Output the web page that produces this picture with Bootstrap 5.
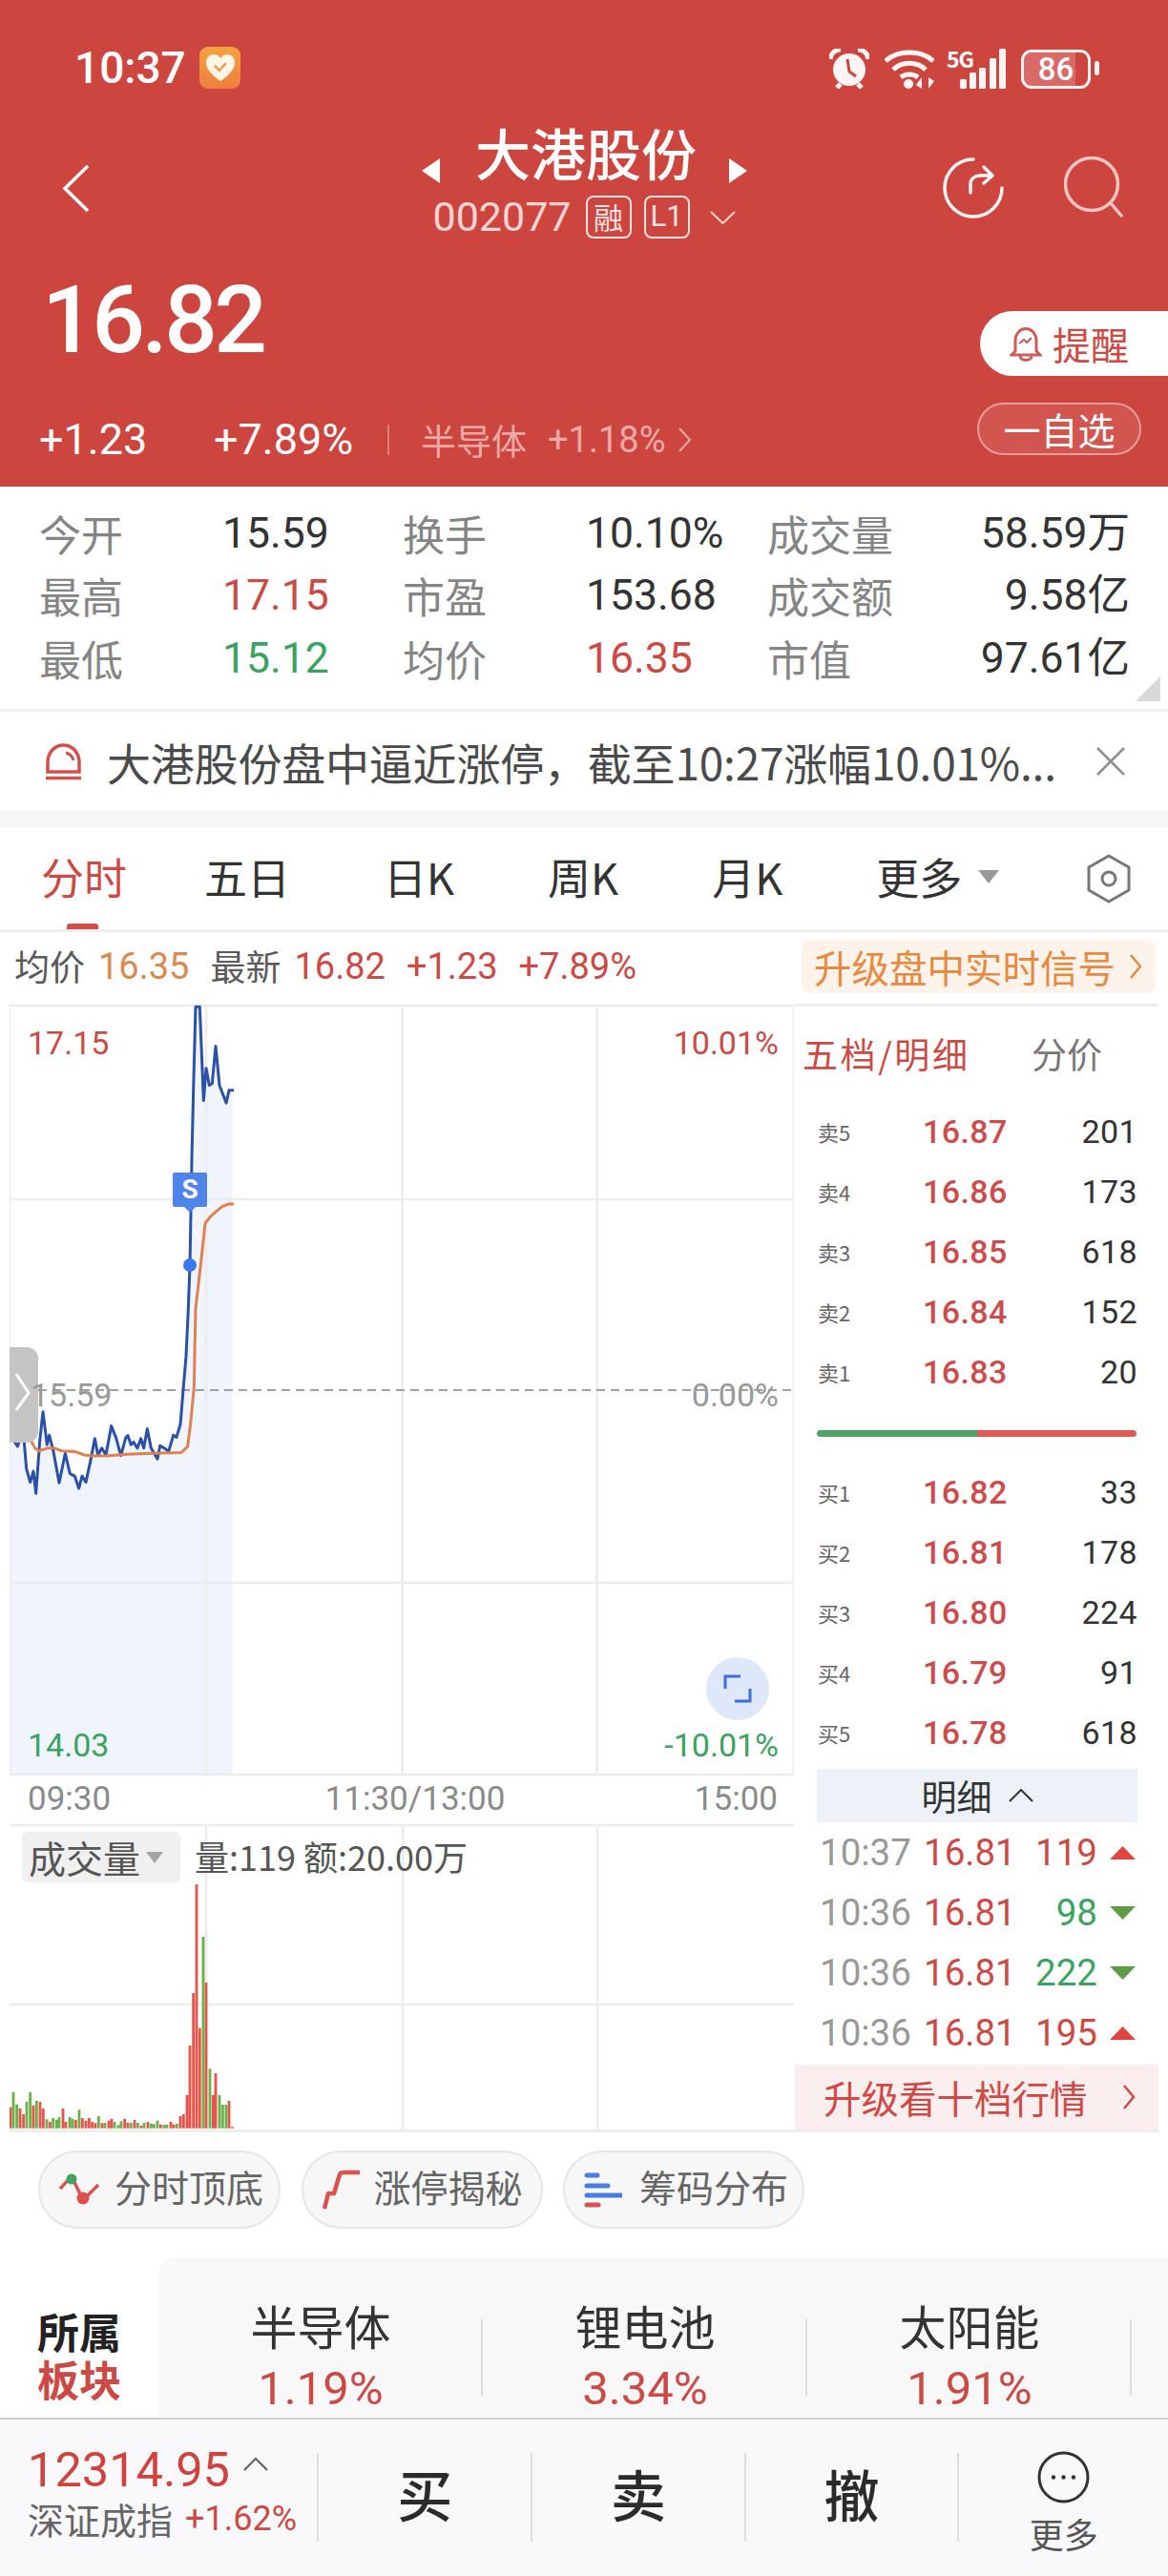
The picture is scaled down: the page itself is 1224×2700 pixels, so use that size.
<!DOCTYPE html>
<html lang="zh-CN">
<head>
<meta charset="utf-8">
<title>大港股份</title>
<link href="https://cdn.jsdelivr.net/npm/bootstrap@5.3.0/dist/css/bootstrap.min.css" rel="stylesheet">
<style>
html,body{margin:0;padding:0;background:#fff}
body{width:1224px;height:2700px;overflow:hidden;font-family:Roboto,"Noto Sans CJK SC",sans-serif;color:#333}
.cjk{font-family:"Noto Sans CJK SC",sans-serif}
.hdr{height:510px;background:#cc453f;color:#fff}
.statusbar{padding:49px 72px 0 78px;height:93px}
.clock{font-size:46px;line-height:44px;font-weight:500;width:131px}
.heart{width:43px;height:44px;border-radius:9px;background:linear-gradient(#f4a23f,#ee7e3e)}
.status-icons{gap:16px}
.fiveg{font-size:23px;line-height:20px;font-weight:700;letter-spacing:-1px;width:27px;align-self:flex-start;margin:2px -29px 0 -3px}
.batt{width:73px;height:41px;border:3px solid #fff3f2;border-radius:11px;background:linear-gradient(90deg,#d96a65 80%,transparent 80%);background-clip:padding-box;font-size:33px;font-weight:500;line-height:35px;text-align:center}
.batt-nub{width:5px;height:15px;background:#fff3f2;border-radius:3px;margin-left:-12px}
.navgrid{display:grid;grid-template-columns:1fr auto 1fr;margin-top:35px;height:120px}
.navback{padding:44px 0 0 65px}
.navright{padding:36px 47px 0 0;gap:62px}
.title{font-size:58px;line-height:62px;font-weight:500;width:233px;text-align:center;margin:0 33px 0 37px}
.tri{margin-top:38px}
.coderow{margin-top:13px;height:45px}
.code{font-size:43px;line-height:45px;color:#f8d5d3;margin-right:15px}
.tag{width:48px;height:45px;border:2px solid #fbe3e2;border-radius:8px;font-size:31px;line-height:40px;text-align:center;color:#fbe3e2;margin-right:13px}
.priceblock{padding:38px 0 0 46px}
.price{font-size:98px;line-height:100px;font-weight:500;letter-spacing:-3.5px;margin-left:-2px}
.chg{margin:55px 0 0 -5px;font-size:45px;line-height:40px;height:40px}
.chg1{width:183px}
.chg2{width:182px}
.chgdiv{width:2px;height:32px;background:#dd7f7b;margin-right:33px}
.chgsec{font-size:37px;color:#eda9a6;margin-right:22px}
.chgpct{font-size:38px;color:#eda9a6;margin-right:13px}
.pillcol{padding-top:78px}
.remind{width:197px;height:68px;background:#fff;border-radius:34px 0 0 34px;color:#cc4a45;font-size:40px;line-height:68px;padding-left:31px;gap:11px}
.watch{width:172px;height:55px;margin:28px 28px 0 0;border:2px solid #e99c98;border-radius:28px;background:#d2554f;color:#fff;font-size:39px;line-height:50px;text-align:center}
.stats{display:grid;grid-template-columns:192px 189px 192px 190px 190px 190px;grid-auto-rows:65.5px;height:236px;padding:16px 0 0 41px;border-bottom:3px solid #eeeeee;position:relative;align-items:center;font-size:44.5px;line-height:1}
.slab{font-size:44px;color:#858585}
.sval{color:#333}
.sr{text-align:right}
.up{color:#cc4a45}
.down{color:#3aa35f}
.corner{position:absolute;right:8px;bottom:8px}
.notice{height:104px;padding:0 45px 0 47px;gap:26px}
.noticetxt{font-size:46px;color:#4a4a4a;line-height:1;white-space:nowrap;width:985px;letter-spacing:-.2px}
.band{height:17px;background:#f6f6f6}
.tabs{height:110px;border-bottom:3px solid #eeeeee;padding:0 40px 4px 43px;position:relative;font-size:45px;gap:98px;flex-wrap:nowrap}
.tabs .nav-link{padding:0;color:#333;line-height:1}
.tabs .nav-link.active{color:#cc4a45}
.tab-first{margin-right:-17px}
.tabbar{position:absolute;left:70px;bottom:0;width:33px;height:6px;background:#d2504b;border-radius:3px 3px 0 0}
.tabmore{gap:17px}
.hexa{position:absolute;right:38px;top:28px}
.inforow{height:75px;padding:0 13px 3px 15px;font-size:38px}
.infolab{color:#5a5a5a;font-size:37px;margin-right:14px}
.infoval{margin-right:22px}
.orange{color:#d98a4e}
.upbtn{width:371px;height:56px;background:#fdf3ea;border-radius:9px;color:#e78a3f;font-size:39.5px;line-height:56px;padding-left:13px;gap:14px;white-space:nowrap}
.chartarea{padding:0 10px}
.leftcol{width:823px}
.canvas-main{position:relative;width:822px;height:810px}
.canvas-main>svg,.canvas-vol>svg{position:absolute;left:0;top:0;display:block}
.clab{position:absolute;font-size:34px;line-height:36px}
.gray{color:#999}
.c-tl{left:19px;top:23px}
.c-tr{right:16px;top:23px}
.c-ml{left:22px;top:392px}
.c-mr{right:16px;top:392px}
.c-bl{left:19px;top:759px}
.c-br{right:16px;top:759px}
.handle{position:absolute;left:0;top:360px;width:30px;height:100px;background:#c4c4c4;border-radius:0 12px 12px 0}
.sflag{position:absolute;left:171px;top:177px;width:36px;height:36px;background:#4f84ea;color:#fff;font-size:28px;line-height:36px;font-weight:700;text-align:center;border-radius:2px}
.sflag::after{content:"";position:absolute;left:12px;top:36px;border:6px solid transparent;border-top-color:#4f84ea;border-bottom:0}
.expand{position:absolute;left:730px;top:685px;width:66px;height:66px;border-radius:50%;background:#dfe8fb}
.axis{height:48px;padding:0 18px 0 19px;font-size:35px;color:#8a8a8a;line-height:47px}
.axismid{margin-left:26px}
.canvas-vol{position:relative;width:822px;height:323px}
.volbadge{position:absolute;left:13px;top:10px;width:166px;height:53px;background:#f0f0f0;border-radius:6px;font-size:39px;line-height:53px;color:#555;padding-left:7px;gap:6px}
.voltxt{position:absolute;left:194px;top:13px;font-size:36px;line-height:44px;color:#555;white-space:nowrap}
.rightcol{width:381px}
.panelhead{border-top:3px solid #eeeeee;padding:24px 23px 25px 8px;height:102.5px;font-size:37px;line-height:50px}
.panelhead .pa{color:#cc4a45;letter-spacing:2.6px;width:240px}
.panelhead .pb{color:#777}
.quote{height:63px;padding:0 22px 0 24px;font-size:34px;letter-spacing:.4px}
.qlab{width:110px;font-size:22px;color:#666;letter-spacing:0}
.qprice{color:#cc4c4c;font-weight:500}
.qnum{margin-left:auto;color:#333}
.splitbar{height:7px;margin:29px 23px 27px 23px;border-radius:4px;overflow:hidden}
.splitbar i{display:block;height:100%}
.mx{height:56px;margin:6.5px 22px 0 23px;background:#edf1f8;font-size:37px;line-height:56px;color:#333;gap:17px}
.dtl{height:63px;padding:0 24px 0 26px;font-size:38.5px}
.dtime{color:#999;width:109px}
.dprice{color:#cc4a45}
.dqty{margin-left:auto;margin-right:13px}
.upg{height:68px;margin-top:1.5px;background:#fbeeee;color:#cf4a45;font-size:39.5px;padding:0 24px 0 30px;white-space:nowrap}
.bottomline{height:3px;margin:-1px 10px 0;background:#eeeeee}
.pills{padding:19px 0 31px 40px;gap:21.500px}
.pilly{height:82px;background:#f7f7f7;border:2px solid #e6e6e6;border-radius:41px;font-size:39px;color:#666;line-height:78px;padding:0 0 0 20px;white-space:nowrap}
.pilly span{margin-top:-9px}
.pw1{width:254px;gap:16px}
.pw2{width:253px;gap:14px}
.pw3{width:253px;gap:18px}
.board{height:167px}
.boardlab{width:166px;padding-top:51px;font-size:44px;font-weight:700;line-height:50px;text-align:center;color:#222}
.boardlist{flex:1;background:#f8f8f8;border-top-left-radius:18px;overflow:hidden}
.bitem{width:340px;flex:none;position:relative;text-align:center;padding-top:42px}
.bitem::after{content:"";position:absolute;right:0;top:64px;width:2px;height:80px;background:#dcdcdc}
.bname{font-size:49px;line-height:56px;color:#333}
.bpct{font-size:49px;line-height:50px;margin-top:14px;color:#cc4a45}
.footerbar{height:167px;background:#f9f9fb;border-top:2px solid #cfcfcf}
.idx{width:333px;padding:28px 0 0 29px}
.idxnum{font-size:50.5px;line-height:50px;color:#d0423d;gap:14px}
.idxnum svg{margin-top:-12px}
.idxname{font-size:38px;line-height:44px;color:#666;margin-top:4px;white-space:nowrap}
.idxpct{font-size:36px;color:#cc4a45;margin-left:13px}
.fcell{width:224px;height:93px;margin-top:35px;border-left:2px solid #dedede;font-size:58px;color:#2b2b2b;font-weight:500;padding-bottom:8px}
.fmore{width:219px;margin-top:33px;padding-bottom:0;border-left:0;font-size:36px;line-height:38px;color:#555;font-weight:400;text-align:center}
.fmore svg{flex:none}
.fmore span{margin-top:12px}
.fdiv{width:2px;height:93px;background:#dedede;margin-top:35px}
</style>
</head>
<body>

<header class="hdr">
  <div class="statusbar d-flex justify-content-between">
    <div class="d-flex">
      <div class="clock">10:37</div>
      <div class="heart d-flex align-items-center justify-content-center">
        <svg width="32" height="30" viewBox="0 0 32 30"><path d="M16 29C6 22 1 16 1 9.500 1 4 5 1 9 1c3 0 5.500 1.500 7 4 1.500-2.500 4-4 7-4 4 0 8 3 8 8.500C31 16 26 22 16 29z" fill="#fff6e8"/><path d="M10 13l5 5 7-8" fill="none" stroke="#eda04c" stroke-width="2.500"/></svg>
      </div>
    </div>
    <div class="status-icons d-flex align-items-end">
      <svg width="42" height="42" viewBox="0 0 42 42"><circle cx="21" cy="22" r="17" fill="#fff5f4"/><path d="M1 11C2 4 7 1 12 1M41 11C40 4 35 1 30 1" fill="none" stroke="#fff5f4" stroke-width="5"/><path d="M8 41l4-4M34 41l-4-4" stroke="#fff5f4" stroke-width="5"/><path d="M19 11l2 13 7 5" fill="none" stroke="#cc453f" stroke-width="3"/></svg>
      <svg width="52" height="42" viewBox="0 0 52 42"><path d="M1 13C14 1 38 1 51 13M9 22C18 13 34 13 43 22M17 30C22 26 30 26 35 30" fill="none" stroke="#fff5f4" stroke-width="5"/><circle cx="25" cy="37" r="5" fill="#fff5f4"/><path d="M39 42V30l-6 8zM46 30v12l6-8z" fill="#fff5f4"/></svg>
      <span class="fiveg cjk">5G</span>
      <svg width="48" height="42" viewBox="0 0 48 42"><g fill="#fff5f4"><rect x="0" y="32" width="7" height="10" rx="1.500"/><rect x="10" y="25" width="7" height="17" rx="1.500"/><rect x="20" y="20" width="7" height="22" rx="1.500"/><rect x="31" y="10" width="7" height="32" rx="1.500"/><rect x="41" y="0" width="7" height="42" rx="1.500"/></g></svg>
      <div class="batt">86</div>
      <div class="batt-nub align-self-center"></div>
    </div>
  </div>

  <div class="navgrid">
    <div class="navback">
      <svg width="29" height="51" viewBox="0 0 29 51" class="d-block"><path d="M27 2L3 25.500 27 49" fill="none" stroke="#fff" stroke-width="3.500"/></svg>
    </div>
    <div>
      <div class="d-flex justify-content-center">
        <svg class="tri" width="19" height="26" viewBox="0 0 19 26"><path d="M19 0L0 13l19 13z" fill="#fff"/></svg>
        <div class="title cjk">大港股份</div>
        <svg class="tri" width="19" height="26" viewBox="0 0 19 26"><path d="M0 0l19 13L0 26z" fill="#fff"/></svg>
      </div>
      <div class="coderow d-flex justify-content-center align-items-center">
        <span class="code">002077</span>
        <span class="tag cjk">融</span>
        <span class="tag">L1</span>
        <svg width="27" height="14" viewBox="0 0 27 14" class="ms-2"><path d="M1 1l12.500 12L26 1" fill="none" stroke="#f8d5d3" stroke-width="2"/></svg>
      </div>
    </div>
    <div class="navright d-flex justify-content-end align-items-start">
      <svg width="66" height="66" viewBox="0 0 66 66"><path d="M33 3A30 30 0 1 0 63 33" fill="none" stroke="#fff3f2" stroke-width="3.500" stroke-linecap="round"/><path d="M30 38V29c0-6 5-9 10-9h12M44 11l9 9-9 8" fill="none" stroke="#fff3f2" stroke-width="3.500" stroke-linecap="round" stroke-linejoin="round"/></svg>
      <svg width="62" height="66" viewBox="0 0 62 66"><circle cx="29" cy="29" r="27.500" fill="none" stroke="#f7c5c2" stroke-width="3.500"/><path d="M50 50l10 12" stroke="#f7c5c2" stroke-width="3.500" stroke-linecap="round"/></svg>
    </div>
  </div>

  <div class="d-flex justify-content-between">
    <div class="priceblock">
      <div class="price">16.82</div>
      <div class="chg d-flex align-items-center">
        <span class="chg1">+1.23</span>
        <span class="chg2">+7.89%</span>
        <span class="chgdiv"></span>
        <span class="chgsec cjk">半导体</span>
        <span class="chgpct">+1.18%</span>
        <svg width="15" height="26" viewBox="0 0 15 26"><path d="M2 1l11 12L2 25" fill="none" stroke="#eda9a6" stroke-width="2"/></svg>
      </div>
    </div>
    <div class="pillcol d-flex flex-column align-items-end">
      <div class="remind d-flex align-items-center cjk">
        <svg width="34" height="37" viewBox="0 0 34 37"><path d="M6 26V15C6 8 11 2.500 17 2.500S28 8 28 15v11l4 4H2zM11 31c0 3 3 4.500 6 4.500s6-1.500 6-4.500" fill="none" stroke="#cc5a55" stroke-width="3"/><path d="M10 18l5-4 3 3 5-5" fill="none" stroke="#cc5a55" stroke-width="2"/></svg>
        <span>提醒</span>
      </div>
      <div class="watch cjk">一自选</div>
    </div>
  </div>
</header>

<section class="stats">
  <span class="slab cjk">今开</span><span class="sval">15.59</span><span class="slab cjk">换手</span><span class="sval">10.10%</span><span class="slab cjk">成交量</span><span class="sval sr">58.59万</span>
  <span class="slab cjk">最高</span><span class="up">17.15</span><span class="slab cjk">市盈</span><span class="sval">153.68</span><span class="slab cjk">成交额</span><span class="sval sr">9.58亿</span>
  <span class="slab cjk">最低</span><span class="down">15.12</span><span class="slab cjk">均价</span><span class="up">16.35</span><span class="slab cjk">市值</span><span class="sval sr">97.61亿</span>
  <svg class="corner" width="26" height="26" viewBox="0 0 26 26"><path d="M26 0v26H0z" fill="#d9d9d9"/></svg>
</section>

<section class="notice d-flex align-items-center">
  <svg width="39" height="39" viewBox="0 0 39 39"><path d="M3 30V20C3 10 10 2 19.500 2S36 10 36 20v10zM1 36.500h37" fill="none" stroke="#d1504b" stroke-width="3.500"/><path d="M22 10c4 1 7 4 8 8" fill="none" stroke="#d1504b" stroke-width="3"/></svg>
  <div class="noticetxt cjk">大港股份盘中逼近涨停，截至10:27涨幅10.01%...</div>
  <svg width="30" height="30" viewBox="0 0 30 30" class="ms-auto"><path d="M1 1l28 28M29 1L1 29" stroke="#8f8f8f" stroke-width="2.500"/></svg>
</section>
<div class="band"></div>

<ul class="nav tabs align-items-center">
  <li class="nav-item tab-first"><a class="nav-link active cjk" href="#">分时</a></li>
  <li class="nav-item"><a class="nav-link cjk" href="#">五日</a></li>
  <li class="nav-item"><a class="nav-link cjk" href="#">日K</a></li>
  <li class="nav-item"><a class="nav-link cjk" href="#">周K</a></li>
  <li class="nav-item"><a class="nav-link cjk" href="#">月K</a></li>
  <li class="nav-item d-flex align-items-center tabmore"><a class="nav-link cjk" href="#">更多</a><svg width="22" height="14" viewBox="0 0 22 14"><path d="M0 0h22L11 14z" fill="#999"/></svg></li>
  <li class="hexa"><svg width="48" height="52" viewBox="0 0 48 52" class="d-block"><path d="M24 2l21 12v24L24 50 3 38V14z" fill="none" stroke="#777" stroke-width="3" stroke-linejoin="round"/><circle cx="24" cy="26" r="7" fill="none" stroke="#777" stroke-width="3"/></svg></li>
  <li class="tabbar"></li>
</ul>

<div class="inforow d-flex align-items-center">
  <span class="infolab cjk">均价</span><span class="infoval orange">16.35</span>
  <span class="infolab cjk">最新</span><span class="infoval up">16.82</span>
  <span class="infoval up">+1.23</span><span class="up">+7.89%</span>
  <div class="upbtn d-flex align-items-center ms-auto cjk">
    <span>升级盘中实时信号</span>
    <svg width="14" height="28" viewBox="0 0 14 28"><path d="M2 2l10 12L2 26" fill="none" stroke="#e78a3f" stroke-width="2.500"/></svg>
  </div>
</div>

<div class="chartarea d-flex">
  <div class="leftcol">
    <div class="canvas-main">
      <svg width="822" height="810" viewBox="10 1052 822 810">
        <g transform="translate(0 1050) scale(.33333 .35714)">
          <path fill="#eff4fd" d="M32 1140L38 1280 55 1305 73 1260 83 1370 95 1410 105 1378 113 1443 125 1290 135 1203 148 1300 155 1272 168 1320 186 1412 205 1325 220 1385 235 1392 248 1428 258 1392 270 1410 285 1345 298 1282 308 1330 320 1310 333 1330 350 1245 365 1280 380 1332 395 1280 402 1273 412 1300 420 1292 432 1310 443 1282 452 1310 463 1253 475 1310 495 1342 503 1303 520 1312 530 1320 545 1272 555 1278 567 1240 575 1150 585 1040 592 900 597 775 600 620 603 460 608 260 615 15 628 15 640 290 648 195 658 245 667 240 678 130 690 245 711 297 720 260 731 260V2265H30z"/>
        </g>
        <g stroke="#ececec" stroke-width="2.500" fill="none">
          <path d="M10 1054H832V1860H10V1054"/>
          <path d="M10 1257H832M10 1659H832M216 1055V1859M421.500 1055V1859M625.500 1055V1859"/>
        </g>
        <path d="M10 1457H832" stroke="#a0a0a0" stroke-width="2" stroke-dasharray="9 6"/>
        <g transform="translate(0 1050) scale(.33333 .35714)" fill="none" stroke-linejoin="round">
          <path vector-effect="non-scaling-stroke" stroke="#2a50a8" stroke-width="3" d="M32 1140L38 1280 55 1305 73 1260 83 1370 95 1410 105 1378 113 1443 125 1290 135 1203 148 1300 155 1272 168 1320 186 1412 205 1325 220 1385 235 1392 248 1428 258 1392 270 1410 285 1345 298 1282 308 1330 320 1310 333 1330 350 1245 365 1280 380 1332 395 1280 402 1273 412 1300 420 1292 432 1310 443 1282 452 1310 463 1253 475 1310 495 1342 503 1303 520 1312 530 1320 545 1272 555 1278 567 1240 575 1150 585 1040 592 900 597 775 600 620 603 460 608 260 615 15 628 15 640 290 648 195 658 245 667 240 678 130 690 245 711 297 720 260 735 260"/>
          <path vector-effect="non-scaling-stroke" stroke="#e0804f" stroke-width="3" d="M32 1140L45 1165 60 1225 75 1235 90 1275 110 1310 122 1318 150 1310 170 1310 195 1318 235 1320 265 1330 290 1333 340 1332 400 1328 480 1325 570 1323 590 1305 600 1230 610 1130 615 900 630 780 645 650 660 632 680 615 700 600 720 593 735 594"/>
        </g>
        <circle cx="199" cy="1326" r="7" fill="#3a78ee"/>
      </svg>
      <div class="handle">
        <svg width="20" height="44" viewBox="0 0 20 44" class="d-block ms-1 mt-4"><path d="M3 4l13 20L3 42" fill="none" stroke="#fff" stroke-width="3"/></svg>
      </div>
      <span class="clab up c-tl">17.15</span>
      <span class="clab up c-tr">10.01%</span>
      <span class="clab gray c-ml">15.59</span>
      <span class="clab gray c-mr">0.00%</span>
      <span class="clab down c-bl">14.03</span>
      <span class="clab down c-br">-10.01%</span>
      <div class="sflag">S</div>
      <div class="expand d-flex align-items-center justify-content-center">
        <svg width="30" height="30" viewBox="0 0 30 30"><path d="M2 15V2h16M28 15v13H12" fill="none" stroke="#3c6fdc" stroke-width="3"/></svg>
      </div>
    </div>
    <div class="axis d-flex justify-content-between">
      <span>09:30</span><span class="axismid">11:30/13:00</span><span>15:00</span>
    </div>
    <div class="canvas-vol">
      <svg width="822" height="323" viewBox="10 1910 822 323">
        <g stroke="#ececec" stroke-width="2.500" fill="none">
          <path d="M10 1913H832M10 2101H832M216 1913V2232M422 1913V2232M626 1913V2232"/>
        </g>
        <g transform="translate(0 1960) scale(.33333)" fill="none" stroke-width="8.500">
          <path stroke="#e8534a" d="M33 812v-66M63 812v-62M74 812v-44M105 812v-72M126 812v-83M136 812v-62M157 812v-20M198 812v-62M207 812v-20M238 812v-26M259 812v-32M270 812v-24M280 812v-32M290 812v-20M300 812v-16M321 812v-16M342 812v-24M351 812v-30M392 812v-30M402 812v-17M423 812v-26M444 812v-8M465 812v-20M505 812v-12M537 812v-20M546 812v-12M567 812v-38M577 812v-44M588 812v-104M597 812v-260M608 812v-425M618 812v-767M628 812v-315M648 812v-458M670 812v-104M678 812v-173M720 812v-86M731 812v-4"/>
          <path stroke="#6cb048" d="M42 812v-113M53 812v-75M84 812v-83M95 812v-113M115 812v-86M147 812v-28M167 812v-32M178 812v-27M186 812v-35M219 812v-35M228 812v-30M249 812v-58M310 812v-38M330 812v-17M360 812v-20M372 812v-10M381 812v-22M412 812v-17M433 812v-17M453 812v-17M475 812v-15M484 812v-13M495 812v-24M516 812v-11M525 812v-11M556 812v-14M639 812v-602M660 812v-187M690 812v-104M700 812v-74M711 812v-74"/>
        </g>
      </svg>
      <div class="volbadge d-flex align-items-center cjk"><span>成交量</span><svg width="18" height="12" viewBox="0 0 18 12"><path d="M0 0h18L9 12z" fill="#a5a5a5"/></svg></div>
      <div class="voltxt cjk">量:119 额:20.00万</div>
    </div>
  </div>

  <aside class="rightcol">
    <div class="panelhead d-flex cjk"><span class="pa">五档/明细</span><span class="pb">分价</span></div>
    <div class="quote d-flex align-items-center"><span class="qlab cjk">卖5</span><span class="qprice">16.87</span><span class="qnum">201</span></div>
    <div class="quote d-flex align-items-center"><span class="qlab cjk">卖4</span><span class="qprice">16.86</span><span class="qnum">173</span></div>
    <div class="quote d-flex align-items-center"><span class="qlab cjk">卖3</span><span class="qprice">16.85</span><span class="qnum">618</span></div>
    <div class="quote d-flex align-items-center"><span class="qlab cjk">卖2</span><span class="qprice">16.84</span><span class="qnum">152</span></div>
    <div class="quote d-flex align-items-center"><span class="qlab cjk">卖1</span><span class="qprice">16.83</span><span class="qnum">20</span></div>
    <div class="splitbar d-flex"><i style="width:50%;background:#4ca565"></i><i style="width:50%;background:#e05a55"></i></div>
    <div class="quote d-flex align-items-center"><span class="qlab cjk">买1</span><span class="qprice">16.82</span><span class="qnum">33</span></div>
    <div class="quote d-flex align-items-center"><span class="qlab cjk">买2</span><span class="qprice">16.81</span><span class="qnum">178</span></div>
    <div class="quote d-flex align-items-center"><span class="qlab cjk">买3</span><span class="qprice">16.80</span><span class="qnum">224</span></div>
    <div class="quote d-flex align-items-center"><span class="qlab cjk">买4</span><span class="qprice">16.79</span><span class="qnum">91</span></div>
    <div class="quote d-flex align-items-center"><span class="qlab cjk">买5</span><span class="qprice">16.78</span><span class="qnum">618</span></div>
    <div class="mx d-flex justify-content-center align-items-center cjk"><span>明细</span><svg width="26" height="14" viewBox="0 0 26 14"><path d="M1 13L13 1l12 12" fill="none" stroke="#333" stroke-width="2"/></svg></div>
    <div class="dtl d-flex align-items-center"><span class="dtime">10:37</span><span class="dprice">16.81</span><span class="dqty up">119</span><svg width="27" height="14" viewBox="0 0 27 14"><path d="M13.500 0L27 14H0z" fill="#e2453f"/></svg></div>
    <div class="dtl d-flex align-items-center"><span class="dtime">10:36</span><span class="dprice">16.81</span><span class="dqty down">98</span><svg width="27" height="14" viewBox="0 0 27 14"><path d="M0 0h27L13.500 14z" fill="#5f9b45"/></svg></div>
    <div class="dtl d-flex align-items-center"><span class="dtime">10:36</span><span class="dprice">16.81</span><span class="dqty down">222</span><svg width="27" height="14" viewBox="0 0 27 14"><path d="M0 0h27L13.500 14z" fill="#5f9b45"/></svg></div>
    <div class="dtl d-flex align-items-center"><span class="dtime">10:36</span><span class="dprice">16.81</span><span class="dqty up">195</span><svg width="27" height="14" viewBox="0 0 27 14"><path d="M13.500 0L27 14H0z" fill="#e2453f"/></svg></div>
    <div class="upg d-flex align-items-center justify-content-between cjk"><span>升级看十档行情</span><svg width="14" height="28" viewBox="0 0 14 28"><path d="M2 2l10 12L2 26" fill="none" stroke="#cf4a45" stroke-width="2.500"/></svg></div>
  </aside>
</div>
<div class="bottomline"></div>

<div class="pills d-flex cjk">
  <div class="pilly pw1 d-flex align-items-center">
    <svg width="42" height="36" viewBox="0 0 42 36"><path d="M1 17L13 4M13 4l12 25M25 29l16-16" fill="none" stroke="#d9534f" stroke-width="3.500"/><circle cx="13" cy="7" r="5.500" fill="#3fa463"/><circle cx="25" cy="27" r="6.500" fill="#e0504b"/></svg>
    <span>分时顶底</span>
  </div>
  <div class="pilly pw2 d-flex align-items-center">
    <svg width="40" height="44" viewBox="0 0 40 44"><path d="M2 42L6 26h6l6-20c0-2 4-2 6-2h15" fill="none" stroke="#d9534f" stroke-width="4.500" stroke-linejoin="round"/></svg>
    <span>涨停揭秘</span>
  </div>
  <div class="pilly pw3 d-flex align-items-center">
    <svg width="40" height="38" viewBox="0 0 40 38"><g fill="none" stroke-width="5" stroke-linecap="round"><path stroke="#4a7de0" d="M3 4h11M3 15h22M3 25h36"/><path stroke="#d9534f" d="M3 35h12"/></g></svg>
    <span>筹码分布</span>
  </div>
</div>

<div class="board d-flex">
  <div class="boardlab cjk">所属<br><span class="up">板块</span></div>
  <div class="boardlist d-flex">
    <div class="bitem"><div class="bname cjk">半导体</div><div class="bpct">1.19%</div></div>
    <div class="bitem"><div class="bname cjk">锂电池</div><div class="bpct">3.34%</div></div>
    <div class="bitem"><div class="bname cjk">太阳能</div><div class="bpct">1.91%</div></div>
  </div>
</div>

<footer class="footerbar d-flex">
  <div class="idx">
    <div class="idxnum d-flex align-items-center">12314.95<svg width="26" height="14" viewBox="0 0 26 14"><path d="M1 13L13 1l12 12" fill="none" stroke="#666" stroke-width="2.200"/></svg></div>
    <div class="idxname d-flex align-items-center"><span class="cjk">深证成指</span><span class="idxpct">+1.62%</span></div>
  </div>
  <div class="fcell d-flex align-items-center justify-content-center cjk">买</div>
  <div class="fcell d-flex align-items-center justify-content-center cjk">卖</div>
  <div class="fcell d-flex align-items-center justify-content-center cjk">撤</div>
  <div class="fdiv"></div>
  <div class="fcell fmore d-flex flex-column align-items-center cjk">
    <svg width="55" height="55" viewBox="0 0 55 55"><circle cx="27.500" cy="27.500" r="25.500" fill="none" stroke="#333" stroke-width="3"/><circle cx="17" cy="27.500" r="2.200" fill="#333"/><circle cx="27.500" cy="27.500" r="2.200" fill="#333"/><circle cx="38" cy="27.500" r="2.200" fill="#333"/></svg>
    <span>更多</span>
  </div>
</footer>

<script src="https://cdn.jsdelivr.net/npm/bootstrap@5.3.0/dist/js/bootstrap.bundle.min.js"></script>
</body>
</html>
